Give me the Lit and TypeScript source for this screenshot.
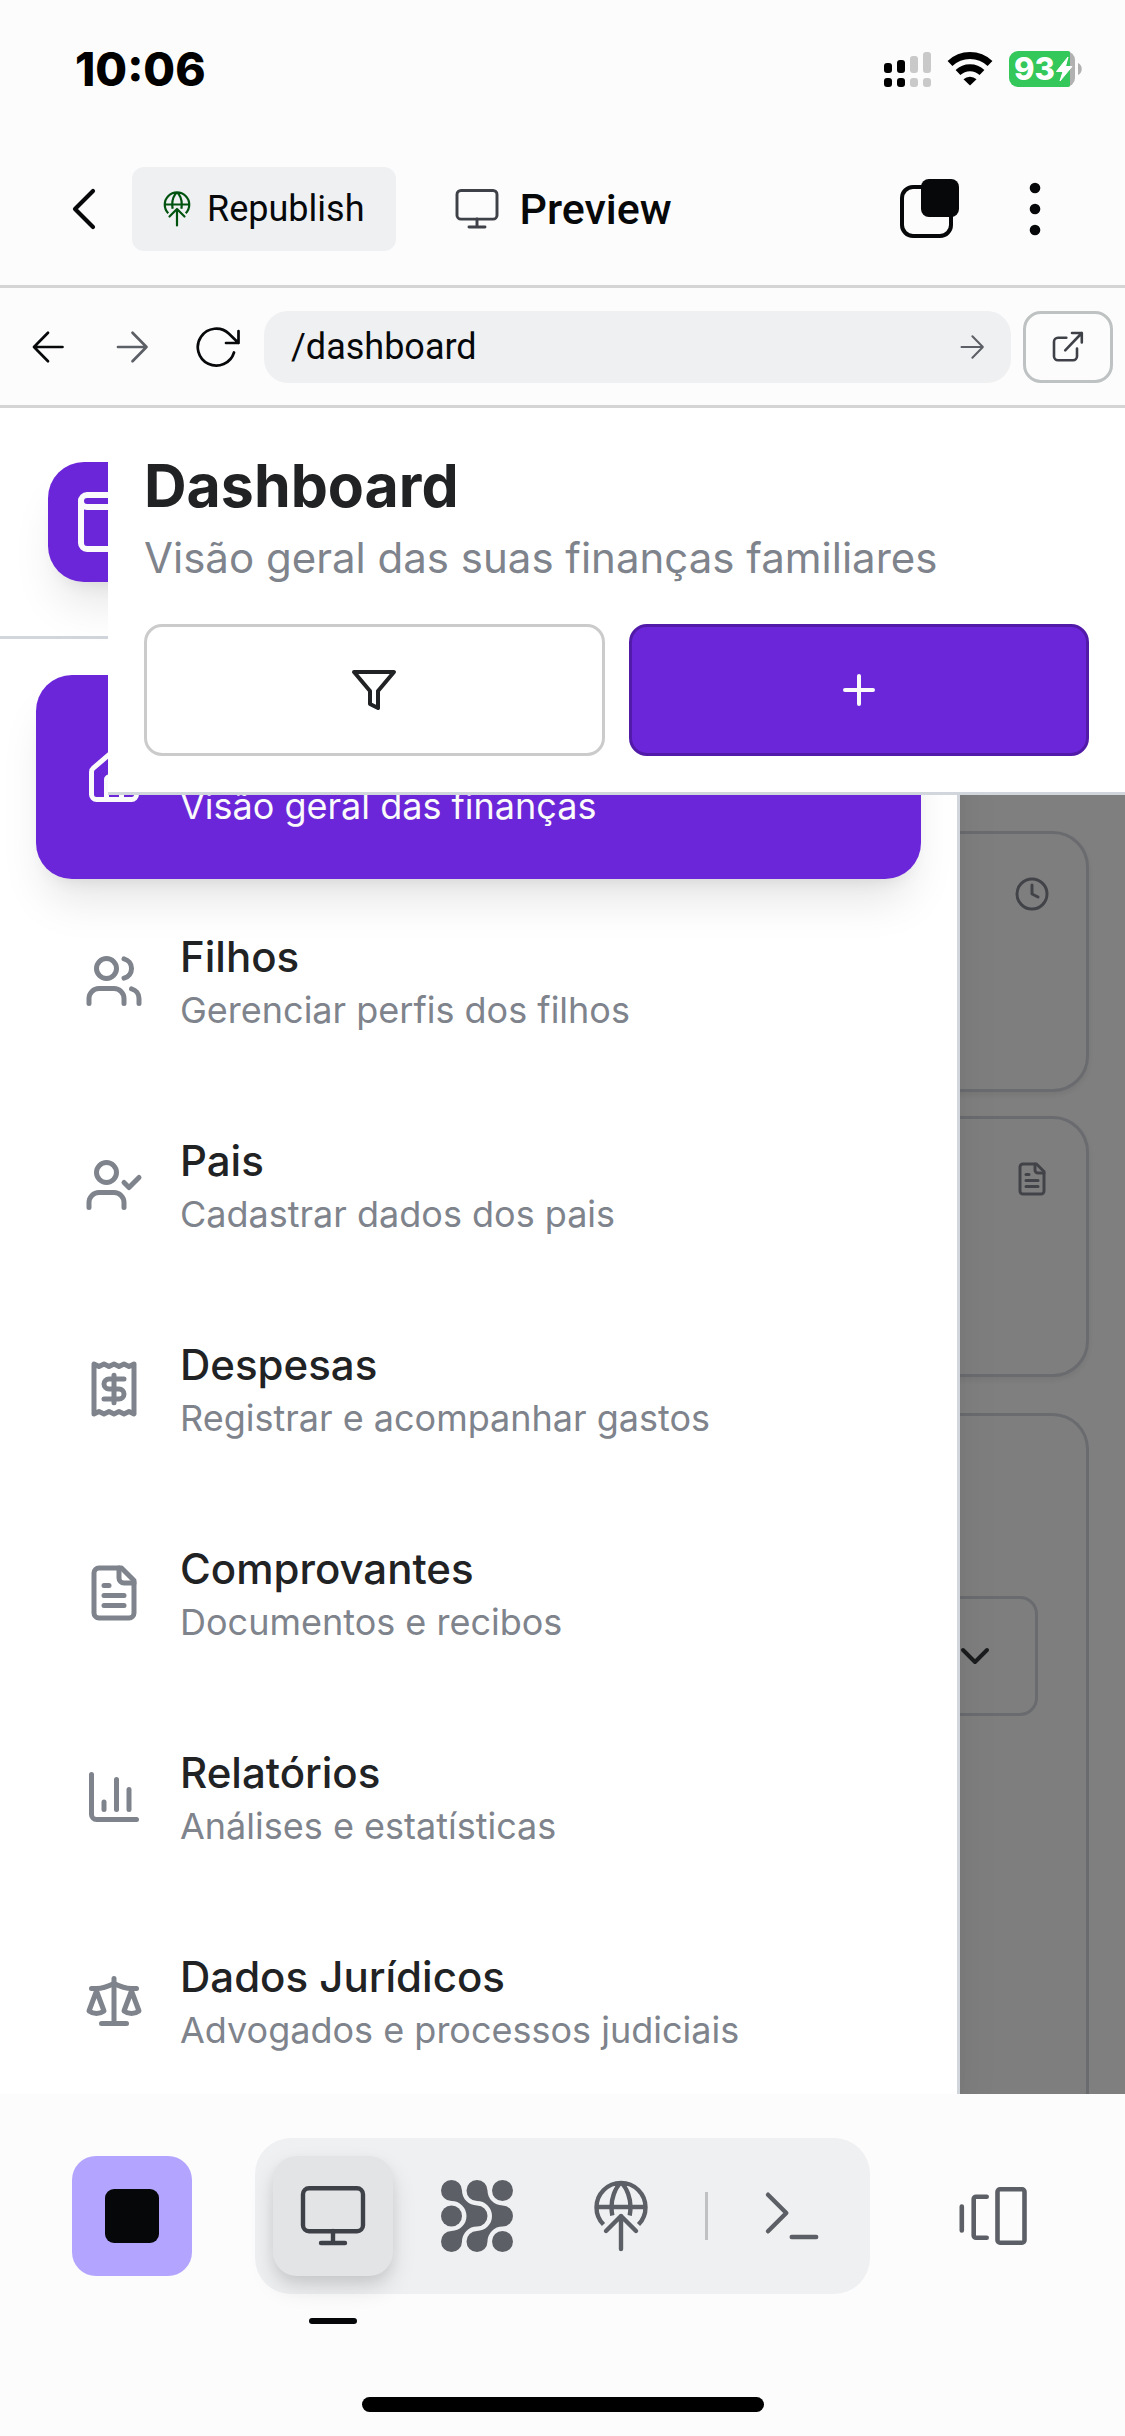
import { LitElement, html, svg, css, nothing } from "lit";
import type { SVGTemplateResult } from "lit";
import { customElement, property } from "lit/decorators.js";
import { classMap } from "lit/directives/class-map.js";

/* Outline icons on a 24-unit grid with a 2-unit stroke. */
const LINE_ICONS: Record<string, SVGTemplateResult> = {
  home: svg`<path d="M15 21v-8a1 1 0 0 0-1-1h-4a1 1 0 0 0-1 1v8"/><path d="M3 10a2 2 0 0 1 .709-1.528l7-5.999a2 2 0 0 1 2.582 0l7 5.999A2 2 0 0 1 21 10v9a2 2 0 0 1-2 2H5a2 2 0 0 1-2-2z"/>`,
  wallet: svg`<path d="M19 7V4a1 1 0 0 0-1-1H5a2 2 0 0 0 0 4h15a1 1 0 0 1 1 1v4h-3a2 2 0 0 0 0 4h3a1 1 0 0 0 1-1v-2a1 1 0 0 0-1-1"/><path d="M3 5v14a2 2 0 0 0 2 2h15a1 1 0 0 0 1-1v-4"/>`,
  users: svg`<path d="M16 21v-2a4 4 0 0 0-4-4H6a4 4 0 0 0-4 4v2"/><circle cx="9" cy="7" r="4"/><path d="M22 21v-2a4 4 0 0 0-3-3.87"/><path d="M16 3.13a4 4 0 0 1 0 7.75"/>`,
  userCheck: svg`<path d="M16 21v-2a4 4 0 0 0-4-4H6a4 4 0 0 0-4 4v2"/><circle cx="9" cy="7" r="4"/><path d="m16 11 2 2 4-4"/>`,
  receipt: svg`<path d="M4 2v20l2-1 2 1 2-1 2 1 2-1 2 1 2-1 2 1V2l-2 1-2-1-2 1-2-1-2 1-2-1-2 1Z"/><path d="M16 8h-6a2 2 0 1 0 0 4h4a2 2 0 1 1 0 4H8"/><path d="M12 17.5v-11"/>`,
  file: svg`<path d="M15 2H6a2 2 0 0 0-2 2v16a2 2 0 0 0 2 2h12a2 2 0 0 0 2-2V7Z"/><path d="M14 2v4a2 2 0 0 0 2 2h4"/><path d="M10 9H8"/><path d="M16 13H8"/><path d="M16 17H8"/>`,
  chart: svg`<path d="M3 3v16a2 2 0 0 0 2 2h16"/><path d="M18 17V9"/><path d="M13 17V5"/><path d="M8 17v-3"/>`,
  scale: svg`<path d="m16 16 3-8 3 8c-.87.65-1.92 1-3 1s-2.13-.35-3-1Z"/><path d="m2 16 3-8 3 8c-.87.65-1.92 1-3 1s-2.13-.35-3-1Z"/><path d="M7 21h10"/><path d="M12 3v18"/><path d="M3 7h2c2 0 5-1 7-2 2 1 5 2 7 2h2"/>`,
  filter: svg`<path d="M22 3H2l8 9.46V19l4 2v-8.54L22 3z"/>`,
  plus: svg`<path d="M5 12h14"/><path d="M12 5v14"/>`,
  clock: svg`<circle cx="12" cy="12" r="10"/><path d="M12 6v6l4 2"/>`,
  chevronDown: svg`<path d="m6 9 6 6 6-6"/>`,
};

/* Icons of the surrounding app, each with its own view box and stroke. */
const SHELL_ICONS: Record<string, { box: number; stroke: number; body: SVGTemplateResult }> = {
  back: { box: 48, stroke: 4.2, body: svg`<path d="M33 6 15 24l18 18"/>` },
  arrowLeft: { box: 48, stroke: 2.7, body: svg`<path d="M38.5 24H10M24 9.7 10 24l14 14.3"/>` },
  arrowRight: { box: 48, stroke: 2.7, body: svg`<path d="M10 24h28.5M24.5 9.7 38.5 24l-14 14.3"/>` },
  reload: { box: 48, stroke: 2.7, body: svg`<path d="M42 29.5A18.5 18.5 0 1 1 37 10.7L46.5 20M46.5 8v12H34"/>` },
  external: { box: 48, stroke: 2.6, body: svg`<path d="M22.3 14.7H14a4 4 0 0 0-4 4v14.6a4 4 0 0 0 4 4h15a4 4 0 0 0 4-4v-7.8M21.2 27.3 37.8 10M28 10h9.8v9.5"/>` },
  monitor: { box: 72, stroke: 4.4, body: svg`<rect x="6" y="8.2" width="60" height="43" rx="6"/><path d="M36 51v12M24 63h24"/>` },
  publish: { box: 72, stroke: 4.4, body: svg`<path stroke-linecap="butt" d="M18.5 44.5a24.500 24.500 0 1 1 35 0M11.500 27h49M36 2.500C29.500 8.500 26.500 19 26.500 27q0 4 .8 8.500M36 2.500C42.500 8.500 45.500 19 45.500 27q0 4-.8 8.500"/><path d="M36 69V36M21 51l15-15 15 15"/>` },
  terminal: { box: 72, stroke: 4.4, body: svg`<path d="m12 14.700 18.300 18.300L12 51.300M35.700 57h24.500"/>` },
  panels: { box: 72, stroke: 4.6, body: svg`<path d="M4.800 26.500v24M29.700 16.700H19a2.300 2.300 0 0 0-2.300 2.300v36.400a2.300 2.300 0 0 0 2.300 2.300h10.700"/><rect x="40.500" y="9.300" width="27" height="53.400" rx="2.500"/>` },
};

@customElement("line-icon")
export class LineIcon extends LitElement {
  @property() name = "";
  static styles = css`
    :host { display: block; flex: none; width: 48px; height: 48px; }
    .glyph { display: block; width: 100%; height: 100%; }
  `;
  render() {
    return html`<svg class="glyph" viewBox="0 0 24 24" fill="none" stroke="currentColor" stroke-width="2"
      stroke-linecap="round" stroke-linejoin="round" aria-hidden="true">${LINE_ICONS[this.name]}</svg>`;
  }
}

@customElement("shell-icon")
export class ShellIcon extends LitElement {
  @property() name = "";
  static styles = css`
    :host { display: block; flex: none; width: 48px; height: 48px; }
    .glyph { display: block; width: 100%; height: 100%; }
  `;
  render() {
    const icon = SHELL_ICONS[this.name];
    return html`<svg class="glyph" viewBox="0 0 ${icon.box} ${icon.box}" fill="none" stroke="currentColor"
      stroke-width=${icon.stroke} stroke-linecap="round" stroke-linejoin="round" aria-hidden="true">${icon.body}</svg>`;
  }
}

@customElement("status-bar")
export class StatusBar extends LitElement {
  static styles = css`
    :host {
      display: flex; align-items: center; justify-content: space-between;
      box-sizing: border-box; height: 135px; padding: 3px 42px 0 75px; color: #000;
    }
    .time { font: 800 46px/54px Inter, sans-serif; }
    .signals { display: flex; align-items: center; gap: 16px; }
    .art { display: block; }
    .battery { display: grid; align-items: center; }
    .battery > * { grid-area: 1 / 1; }
    .level { padding-left: 5px; font: 800 31px/36px Inter, sans-serif; color: #fff; }
  `;
  render() {
    return html`
      <span class="time">10:06</span>
      <div class="signals">
        <svg class="art" width="48" height="36" viewBox="0 0 48 36" aria-hidden="true">
          <g fill="#000">
            <rect x="1" y="12" width="8" height="10" rx="3"/><rect x="14" y="9" width="8" height="13" rx="3"/>
            <rect x="1" y="27" width="8" height="9" rx="3"/><rect x="14" y="27" width="8" height="9" rx="3"/>
          </g>
          <g fill="#c9c9c9">
            <rect x="27" y="5" width="8" height="17" rx="3"/><rect x="40" y="1" width="8" height="21" rx="3"/>
            <rect x="27" y="27" width="8" height="9" rx="3"/><rect x="40" y="27" width="8" height="9" rx="3"/>
          </g>
        </svg>
        <svg class="art" width="46" height="36" viewBox="0 0 46 36" aria-hidden="true">
          <path d="M3 12.5a29 29 0 0 1 40 0" fill="none" stroke="#000" stroke-width="7"/>
          <path d="M11 21.5a17.5 17.5 0 0 1 24 0" fill="none" stroke="#000" stroke-width="7"/>
          <path d="m23 34.5-6.5-6.3a9.5 9.5 0 0 1 13 0z"/>
        </svg>
        <div class="battery">
          <svg class="art" width="74" height="36" viewBox="0 0 74 36" aria-hidden="true">
            <path d="M57 0a9 9 0 0 1 9 9v18a9 9 0 0 1-9 9z" fill="#b1b1b1"/>
            <path d="M9 0h50q2 .4 2 1v34q0 .6-2 1H9a9 9 0 0 1-9-9V9a9 9 0 0 1 9-9z" fill="#34c759"/>
            <path d="M69 12c5 2 5 10 0 12z" fill="#b1b1b1"/>
            <path d="M59 6 47.5 20.5H54L51 30l12-14.5h-6.500z" fill="#fff" stroke="#fff" stroke-width="1" stroke-linejoin="round"/>
          </svg>
          <span class="level">93</span>
        </div>
      </div>`;
  }
}

@customElement("workspace-header")
export class WorkspaceHeader extends LitElement {
  static styles = css`
    :host { display: block; color: #07080a; font-family: Roboto, sans-serif; }
    button { border: 0; margin: 0; padding: 0; background: none; color: inherit; font: inherit; }
    .bar { display: flex; align-items: center; padding: 32px 66px 34px 36px; border-bottom: 3px solid #d4d4d4; }
    .back { padding: 18px 24px; }
    .republish {
      display: flex; align-items: center; gap: 12px; height: 84px; padding: 0 32px 0 27px;
      border-radius: 12px; background: #eff0f2; font-size: 36px; line-height: 48px;
    }
    .republish shell-icon { width: 36px; height: 36px; color: #00530f; }
    .preview {
      display: flex; align-items: center; gap: 18px; margin-left: 57px;
      font-size: 43px; line-height: 54px; font-weight: 500;
    }
    .preview shell-icon { color: #3f4148; }
    .actions { display: flex; align-items: center; gap: 51px; margin-left: auto; }
    .art { display: block; }
    .address { display: flex; align-items: center; padding: 23px 12px 22px 6px; border-bottom: 3px solid #d4d4d4; }
    .nav { padding: 12px 18px; }
    .forward { color: #5c5f66; }
    .field {
      flex: 1; min-width: 0; display: flex; align-items: center; height: 72px; margin: 0 12px 0 6px;
      padding-right: 21px; border-radius: 24px; background: #eff0f2;
    }
    .path {
      flex: 1; min-width: 0; height: 72px; border: 0; margin: 0; padding: 0 0 0 27px; outline: 0;
      background: none; color: inherit; font: 400 36px/48px Roboto, sans-serif;
    }
    .go { color: #5c5f66; }
    .go shell-icon { width: 36px; height: 36px; }
    .open {
      display: grid; place-items: center; box-sizing: border-box; width: 90px; height: 72px;
      border: 3px solid #bec2c2; border-radius: 18px; color: #3f4148;
    }
  `;
  render() {
    return html`
      <div class="bar">
        <button class="back" aria-label="Back"><shell-icon name="back"></shell-icon></button>
        <button class="republish"><shell-icon name="publish"></shell-icon>Republish</button>
        <button class="preview"><shell-icon name="monitor"></shell-icon>Preview</button>
        <div class="actions">
          <button aria-label="Tabs">
            <svg class="art" width="60" height="60" viewBox="0 0 60 60" aria-hidden="true">
              <rect x="2" y="8" width="49" height="49" rx="11" fill="none" stroke="currentColor" stroke-width="4"/>
              <rect x="21" y="0" width="38" height="38" rx="8" fill="currentColor"/>
            </svg>
          </button>
          <button aria-label="More">
            <svg class="art" width="48" height="60" viewBox="0 0 48 60" fill="currentColor" aria-hidden="true">
              <circle cx="24" cy="9" r="5.3"/><circle cx="24" cy="30" r="5.3"/><circle cx="24" cy="51" r="5.3"/>
            </svg>
          </button>
        </div>
      </div>
      <div class="address">
        <button class="nav" aria-label="Previous page"><shell-icon name="arrowLeft"></shell-icon></button>
        <button class="nav forward" aria-label="Next page"><shell-icon name="arrowRight"></shell-icon></button>
        <button class="nav" aria-label="Reload"><shell-icon name="reload"></shell-icon></button>
        <div class="field">
          <input class="path" type="text" aria-label="Path" .value=${"/dashboard"} />
          <button class="go" aria-label="Go"><shell-icon name="arrowRight"></shell-icon></button>
        </div>
        <button class="open" aria-label="Open in new tab"><shell-icon name="external"></shell-icon></button>
      </div>`;
  }
}

interface NavItem { icon: string; title?: string; detail: string; active?: boolean; }

const NAV: NavItem[] = [
  { icon: "home", detail: "Visão geral das finanças", active: true },
  { icon: "users", title: "Filhos", detail: "Gerenciar perfis dos filhos" },
  { icon: "userCheck", title: "Pais", detail: "Cadastrar dados dos pais" },
  { icon: "receipt", title: "Despesas", detail: "Registrar e acompanhar gastos" },
  { icon: "file", title: "Comprovantes", detail: "Documentos e recibos" },
  { icon: "chart", title: "Relatórios", detail: "Análises e estatísticas" },
  { icon: "scale", title: "Dados Jurídicos", detail: "Advogados e processos judiciais" },
];

@customElement("side-menu")
export class SideMenu extends LitElement {
  static styles = css`
    :host {
      display: block; box-sizing: border-box; overflow: hidden; background: #fff;
      border-right: 3px solid #d1d5dc; font-family: Inter, sans-serif;
    }
    .brand { padding: 54px 48px; border-bottom: 3px solid #d1d5dc; }
    .logo {
      display: grid; place-items: center; width: 120px; height: 120px; border-radius: 36px;
      background: #6b26d9; color: #fafafa;
      box-shadow: 0 30px 45px -9px rgba(0, 0, 0, 0.1), 0 12px 18px -12px rgba(0, 0, 0, 0.1);
    }
    .logo line-icon { width: 72px; height: 72px; }
    .list { display: flex; flex-direction: column; padding: 36px 36px 0; }
    .item {
      display: flex; align-items: center; gap: 36px; padding: 48px; border-radius: 36px;
      color: #7e838c; text-decoration: none;
    }
    .item line-icon { width: 60px; height: 60px; }
    .active {
      background: #6b26d9; color: #fafafa;
      box-shadow: 0 30px 45px -9px rgba(0, 0, 0, 0.1), 0 12px 18px -12px rgba(0, 0, 0, 0.1);
    }
    .title { height: 60px; font-size: 42px; line-height: 60px; font-weight: 500; color: #212224; }
    .detail { font-size: 36px; line-height: 46px; padding-bottom: 2px; white-space: nowrap; }
  `;
  render() {
    return html`
      <div class="brand"><div class="logo"><line-icon name="wallet"></line-icon></div></div>
      <nav class="list">
        ${NAV.map((item) => html`
          <a class=${classMap({ item: true, active: !!item.active })} href="#" aria-current=${item.active ? "page" : nothing}>
            <line-icon name=${item.icon}></line-icon>
            <div>
              <div class="title">${item.title ?? nothing}</div>
              <div class="detail">${item.detail}</div>
            </div>
          </a>`)}
      </nav>`;
  }
}

@customElement("finance-page")
export class FinancePage extends LitElement {
  static styles = css`
    :host {
      position: relative; display: flex; flex-direction: column; overflow: hidden;
      background: #fff; font-family: Inter, sans-serif; color: #212224;
    }
    .header {
      position: relative; z-index: 3; margin-left: 108px; padding: 36px;
      background: #fff; border-bottom: 3px solid #d1d5dc;
    }
    .title { margin: 0; font-size: 59px; line-height: 84px; font-weight: 700; }
    .subtitle { margin: 0 0 36px; font-size: 42px; line-height: 60px; color: #7e838c; }
    .buttons { display: grid; grid-template-columns: 1fr 1fr; gap: 24px; }
    .button {
      display: grid; place-items: center; height: 132px; padding: 0; box-sizing: border-box;
      border: 3px solid #cbcbcb; border-radius: 18px; background: #fff; color: #212224;
    }
    .primary { background: #6b26d9; border-color: #521aa8; color: #fafafa; }
    .cards { flex: 1; display: flex; flex-direction: column; margin-left: 108px; padding: 36px 36px 0; }
    .card {
      box-sizing: border-box; display: flex; justify-content: flex-end; height: 261px; margin-bottom: 24px;
      padding: 42px 36px; border: 3px solid #d4d6de; border-radius: 36px; background: #fcfcfc;
      box-shadow: 0 3px 6px rgba(0, 0, 0, 0.08); color: #858791;
    }
    .card line-icon { width: 36px; height: 36px; }
    .panel {
      flex: 1; margin-top: 12px; padding: 180px 48px 0; border: 3px solid #d4d6de; border-bottom: 0;
      border-radius: 36px 36px 0 0; background: #fcfcfc;
    }
    .picker { display: grid; align-items: center; }
    .picker > * { grid-area: 1 / 1; }
    .select {
      appearance: none; box-sizing: border-box; width: 100%; height: 120px; margin: 0;
      border: 3px solid #d4d6de; border-radius: 18px; background: #fcfcfc; font: inherit;
    }
    .chevron { justify-self: end; margin-right: 39px; pointer-events: none; color: #36383a; }
    .scrim { position: absolute; inset: 0; z-index: 1; background: rgba(0, 0, 0, 0.5); }
    .menu {
      position: absolute; z-index: 2; inset: 0 auto 0 0; width: calc(100% - 165px); max-width: 960px;
      box-shadow: 0 30px 45px -9px rgba(0, 0, 0, 0.1), 0 12px 18px -12px rgba(0, 0, 0, 0.1);
    }
  `;
  render() {
    return html`
      <header class="header">
        <h1 class="title">Dashboard</h1>
        <p class="subtitle">Visão geral das suas finanças familiares</p>
        <div class="buttons">
          <button class="button" aria-label="Filtrar"><line-icon name="filter"></line-icon></button>
          <button class="button primary" aria-label="Adicionar"><line-icon name="plus"></line-icon></button>
        </div>
      </header>
      <main class="cards">
        <section class="card"><line-icon name="clock"></line-icon></section>
        <section class="card"><line-icon name="file"></line-icon></section>
        <section class="panel">
          <div class="picker">
            <select class="select" aria-label="Período"></select>
            <line-icon class="chevron" name="chevronDown"></line-icon>
          </div>
        </section>
      </main>
      <div class="scrim"></div>
      <side-menu class="menu"></side-menu>`;
  }
}

@customElement("workspace-dock")
export class WorkspaceDock extends LitElement {
  static styles = css`
    :host { display: block; padding: 44px 0 24px; color: #5c5f66; }
    button {
      display: grid; place-items: center; flex: none; width: 120px; height: 120px; border: 0; margin: 0; padding: 0;
      border-radius: 24px; background: none; color: inherit;
    }
    shell-icon { width: 72px; height: 72px; }
    .row { display: flex; align-items: center; justify-content: space-between; padding: 0 72px; }
    .stop { background: #b2a4ff; }
    .square { width: 54px; height: 54px; border-radius: 9px; background: #050709; }
    .group { display: flex; align-items: center; gap: 24px; padding: 18px; border-radius: 36px; background: #eff0f2; }
    .tab { position: relative; }
    .current {
      background: #e3e4e6; color: #3f4148;
      box-shadow: 0 12px 24px rgba(0, 0, 0, 0.12), 0 6px 12px rgba(0, 0, 0, 0.06);
    }
    .marker { position: absolute; left: 36px; top: 162px; width: 48px; height: 6px; border-radius: 3px; background: #050709; }
    .divider { width: 3px; height: 48px; background: #c0c1c3; }
    .home { width: 402px; height: 15px; margin: 103px auto 0; border-radius: 8px; background: #000; }
  `;
  render() {
    const ribbon = "M10.5 0A10.5 10.5 0 0 1 21 10.5A15 15 0 0 0 36 25.5A10.5 10.5 0 0 1 36 46.5A15 15 0 0 0 21 61.5A10.5 10.5 0 1 1 10.5 51A15 15 0 0 0 10.5 21A10.5 10.5 0 0 1 10.5 0Z";
    return html`
      <div class="row">
        <button class="stop" aria-label="Stop"><span class="square"></span></button>
        <div class="group">
          <button class="tab current" aria-label="Preview"><shell-icon name="monitor"></shell-icon><span class="marker"></span></button>
          <button class="tab" aria-label="Agent">
            <svg width="72" height="72" viewBox="0 0 72 72" fill="currentColor" aria-hidden="true">
              <path d=${ribbon}/><path d=${ribbon} transform="translate(25.5 0)"/>
              <circle cx="10.5" cy="36" r="10.5"/><circle cx="61.5" cy="10.5" r="10.5"/><circle cx="61.5" cy="61.5" r="10.5"/>
            </svg>
          </button>
          <button class="tab" aria-label="Publish"><shell-icon name="publish"></shell-icon></button>
          <span class="divider"></span>
          <button class="tab" aria-label="Shell"><shell-icon name="terminal"></shell-icon></button>
        </div>
        <button aria-label="Panels"><shell-icon name="panels"></shell-icon></button>
      </div>
      <div class="home"></div>`;
  }
}

@customElement("app-root")
export class AppRoot extends LitElement {
  static styles = css`
    :host { display: flex; flex-direction: column; min-height: 100vh; background: #fcfcfc; }
    .page { flex: 1; }
  `;
  render() {
    return html`
      <status-bar></status-bar>
      <workspace-header></workspace-header>
      <finance-page class="page"></finance-page>
      <workspace-dock></workspace-dock>`;
  }
}
